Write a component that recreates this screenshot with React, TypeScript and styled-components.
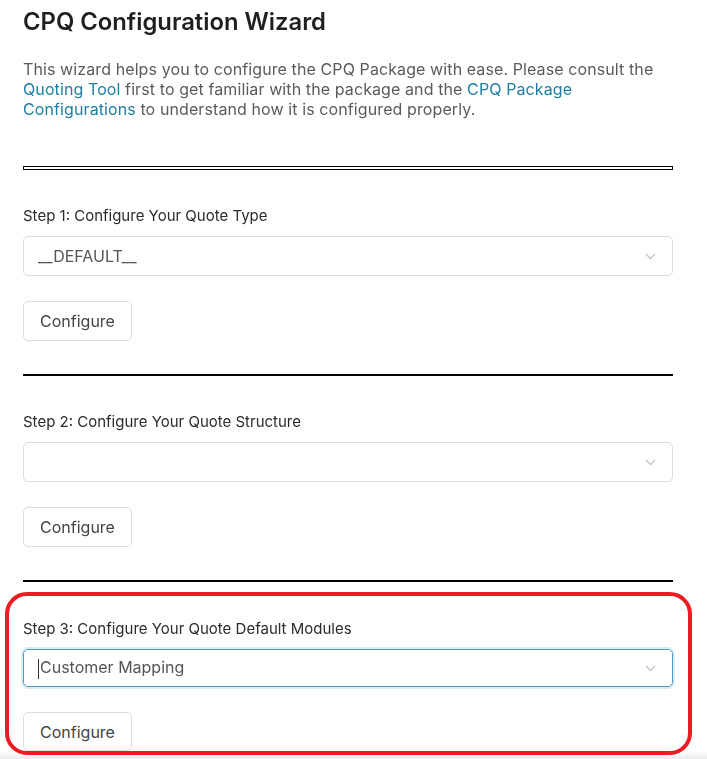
import React from "react";
import styled, { createGlobalStyle } from "styled-components";

const Global = createGlobalStyle`
  html { background: #fff; }
  html, body { margin: 0; padding: 0; }
  body { font-family: Inter, "Noto Sans", sans-serif; color: #222; }
`;

const Page = styled.div`
  width: 650px;
  padding: 7px 0 0 23px;
  display: flex;
  flex-direction: column;
`;

const Title = styled.h1`
  margin: 0;
  font-size: 23.8px;
  line-height: 30px;
  font-weight: 600;
  color: #1f1f1f;
`;

const Intro = styled.p`
  margin: 22px 0 0;
  font-size: 16px;
  letter-spacing: 0.1px;
  line-height: 20px;
  color: #5b5b5b;
`;

const Link = styled.a`
  color: #1f7ea1;
  text-decoration: none;
`;

const Rule = styled.hr<{ $double?: boolean }>`
  margin: ${(p) => (p.$double ? "47px 0 0" : "33px 0 0")};
  width: 100%;
  box-sizing: border-box;
  height: ${(p) => (p.$double ? "4px" : "2px")};
  border: ${(p) => (p.$double ? "1px solid #000" : "none")};
  background: ${(p) => (p.$double ? "#fff" : "#000")};
`;

const Step = styled.section<{ $highlight?: boolean }>`
  display: flex;
  flex-direction: column;
  ${(p) =>
    p.$highlight
      ? `
    margin: 10px -19px 0 -18px;
    padding: 23px 15px 0 14px;
    box-sizing: border-box;
    height: 163px;
    border: 4px solid #ec1c24;
    border-radius: 22px;
  `
      : `margin-top: 36px;`}
`;

const Label = styled.label`
  font-size: 15px;
  line-height: 20px;
  color: #2b2b2b;
`;

const Select = styled.div<{ $focused?: boolean }>`
  margin-top: 10px;
  height: 40px;
  box-sizing: border-box;
  border: 1px solid ${(p) => (p.$focused ? "#4a9cc0" : "#dcdcdc")};
  border-radius: 5px;
  box-shadow: ${(p) => (p.$focused ? "0 0 0 2px rgba(74,156,192,0.18)" : "none")};
  display: flex;
  align-items: center;
  padding: 0 16px 0 14px;
  font-size: 16px;
  color: #555;
`;

const Value = styled.span`
  flex: 1;
`;

const Caret = styled.span`
  display: inline-block;
  width: 1px;
  height: 20px;
  background: #333;
  margin-right: 1px;
  vertical-align: middle;
`;

const Chevron = () => (
  <svg width="11" height="7" viewBox="0 0 11 7" fill="none">
    <path d="M1 1l4.5 4.5L10 1" stroke="#c4c4c4" strokeWidth="1.4" />
  </svg>
);

const Button = styled.button`
  margin-top: 25px;
  align-self: flex-start;
  width: 109px;
  height: 40px;
  box-sizing: border-box;
  background: #fff;
  border: 1px solid #dcdcdc;
  border-radius: 5px;
  font-family: inherit;
  font-size: 16px;
  color: #444;
  font-weight: 400;
`;

const BottomShade = styled.div`
  position: fixed;
  left: 0;
  right: 0;
  bottom: 0;
  height: 8px;
  z-index: -1;
  background: linear-gradient(#fff, #ececec);
`;

export default function App() {
  return (
    <>
      <Global />
      <BottomShade />
      <Page>
        <Title>CPQ Configuration Wizard</Title>
        <Intro>
          This wizard helps you to configure the CPQ Package with ease. Please consult the{" "}
          <Link href="#">Quoting Tool</Link> first to get familiar with the package and the{" "}
          <Link href="#">CPQ Package Configurations</Link> to understand how it is configured properly.
        </Intro>
        <Rule $double />
        <Step>
          <Label>Step 1: Configure Your Quote Type</Label>
          <Select>
            <Value>__DEFAULT__</Value>
            <Chevron />
          </Select>
          <Button>Configure</Button>
        </Step>
        <Rule />
        <Step>
          <Label>Step 2: Configure Your Quote Structure</Label>
          <Select>
            <Value></Value>
            <Chevron />
          </Select>
          <Button>Configure</Button>
        </Step>
        <Rule />
        <Step $highlight>
          <Label>Step 3: Configure Your Quote Default Modules</Label>
          <Select $focused>
            <Value>
              <Caret />
              Customer Mapping
            </Value>
            <Chevron />
          </Select>
          <Button>Configure</Button>
        </Step>
      </Page>
    </>
  );
}
